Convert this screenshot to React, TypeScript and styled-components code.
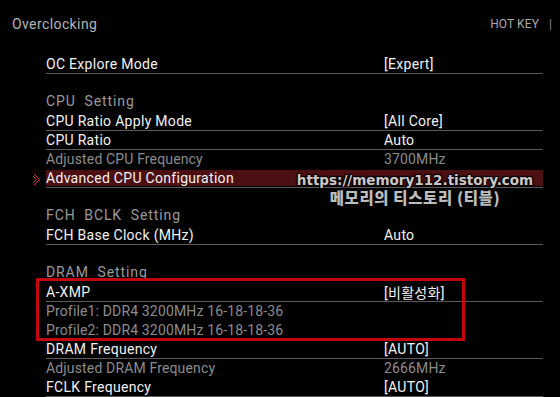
import { createGlobalStyle, styled } from "styled-components";

type TRow =
  | { kind: "item"; label: string; value?: string; dim?: boolean; line?: boolean; active?: boolean }
  | { kind: "section"; label: string }
  | { kind: "gap" };

const rows: TRow[] = [
  { kind: "item", label: "OC Explore Mode", value: "[Expert]", line: true },
  { kind: "gap" },
  { kind: "section", label: "CPU  Setting" },
  { kind: "item", label: "CPU Ratio Apply Mode", value: "[All Core]", line: true },
  { kind: "item", label: "CPU Ratio", value: "Auto", line: true },
  { kind: "item", label: "Adjusted CPU Frequency", value: "3700MHz", dim: true },
  { kind: "item", label: "Advanced CPU Configuration", line: true, active: true },
  { kind: "gap" },
  { kind: "section", label: "FCH  BCLK  Setting" },
  { kind: "item", label: "FCH Base Clock (MHz)", value: "Auto", line: true },
  { kind: "gap" },
  { kind: "section", label: "DRAM  Setting" },
  { kind: "item", label: "A-XMP", value: "[비활성화]", line: true },
  { kind: "item", label: "Profile1: DDR4 3200MHz 16-18-18-36", dim: true },
  { kind: "item", label: "Profile2: DDR4 3200MHz 16-18-18-36", dim: true },
  { kind: "item", label: "DRAM Frequency", value: "[AUTO]", line: true },
  { kind: "item", label: "Adjusted DRAM Frequency", value: "2666MHz", dim: true },
  { kind: "item", label: "FCLK Frequency", value: "[AUTO]", line: true },
];

const App = () => {
  return (
    <>
      <GlobalStyle />
      <Screen>
        <TopBar>
          <Title>Overclocking</Title>
          <HotKey>
            HOT KEY <Sep>|</Sep>
          </HotKey>
        </TopBar>
        <List>
          {rows.map((row, i) => {
            if (row.kind === "gap") return <Gap key={i} />;
            if (row.kind === "section") return <Section key={i}>{row.label}</Section>;
            return (
              <Row key={i} $line={row.line} $active={row.active} $dim={row.dim}>
                {row.active && (
                  <Chevron width="8" height="13" viewBox="0 0 8 13">
                    <path d="M1 1 L6.5 6.5 L1 12" fill="none" stroke="#e0231c" strokeWidth="1" />
                    <path d="M0 3 L3.5 6.5 L0 10" fill="none" stroke="#e0231c" strokeWidth="1" />
                  </Chevron>
                )}
                <Label>{row.label}</Label>
                {row.value && <Value>{row.value}</Value>}
              </Row>
            );
          })}
          <MarkBox />
        </List>
        <Watermark>
          <MarkUrl>https://memory112.tistory.com</MarkUrl>
          <MarkName>메모리의 티스토리 (티블)</MarkName>
        </Watermark>
      </Screen>
    </>
  );
};

const GlobalStyle = createGlobalStyle`
  html, body { margin: 0; padding: 0; background: #000; }
  body { font-family: "Roboto", "Noto Sans CJK KR", sans-serif; }
`;

const Screen = styled.div`
  position: relative;
  width: 560px;
  height: 397px;
  overflow: hidden;
  background: #000;
  color: #f2f2f2;
`;

const TopBar = styled.div`
  height: 46px;
  display: flex;
  align-items: center;
  justify-content: space-between;
  padding: 2px 8px 0 12px;
  box-sizing: border-box;
`;

const Title = styled.div`
  font-size: 14px;
  color: #b4b4b4;
  letter-spacing: 0.4px;
`;

const HotKey = styled.div`
  font-size: 12px;
  color: #a8a8a8;
  display: flex;
  gap: 10px;
  letter-spacing: 0.1px;
`;

const Sep = styled.span`
  color: #888;
`;

const List = styled.div`
  position: relative;
  margin: 9px 0 0 46px;
  width: 497px;
`;

const Gap = styled.div`
  height: 19px;
`;

const Section = styled.div`
  height: 19px;
  line-height: 16px;
  font-size: 14px;
  color: #9a9a9a;
  white-space: pre;
  letter-spacing: 0.9px;
`;

const Row = styled.div<{ $line?: boolean; $active?: boolean; $dim?: boolean }>`
  position: relative;
  height: 19px;
  box-sizing: border-box;
  display: flex;
  align-items: center;
  font-size: 14px;
  letter-spacing: ${({ $dim }) => ($dim ? "0.15px" : "0.3px")};
  color: ${({ $dim }) => ($dim ? "#8c8c8c" : "#f2f2f2")};
  border-bottom: 1px solid ${({ $line }) => ($line ? "#5a5a5a" : "transparent")};
  background: ${({ $active }) => ($active ? "linear-gradient(#000 0 1px, #4c1012 1px 17px, #000 17px)" : "none")};
`;

const Label = styled.span`
  width: 338px;
  white-space: nowrap;
`;

const Value = styled.span`
  white-space: nowrap;
`;

const Chevron = styled.svg`
  position: absolute;
  left: -13px;
  top: 4px;
`;

const MarkBox = styled.div`
  position: absolute;
  left: -10px;
  top: 223px;
  width: 429px;
  height: 63px;
  box-sizing: border-box;
  border: 3px solid #c4040c;
`;

const Watermark = styled.div`
  position: absolute;
  left: 296px;
  top: 172px;
  width: 238px;
  display: flex;
  flex-direction: column;
  align-items: center;
  font-weight: bold;
  text-shadow: 0 0 2px #000, 1px 1px 1px #000, -1px -1px 1px #000, 1px -1px 1px #000, -1px 1px 1px #000;
`;

const MarkUrl = styled.div`
  font-family: "DejaVu Sans", sans-serif;
  font-size: 13.5px;
  color: #d0c6c6;
  line-height: 17px;
`;

const MarkName = styled.div`
  font-family: "Noto Sans CJK KR", sans-serif;
  font-size: 15.5px;
  font-weight: 900;
  letter-spacing: 0.6px;
  color: #bdbdbd;
  line-height: 17px;
`;

export default App;
